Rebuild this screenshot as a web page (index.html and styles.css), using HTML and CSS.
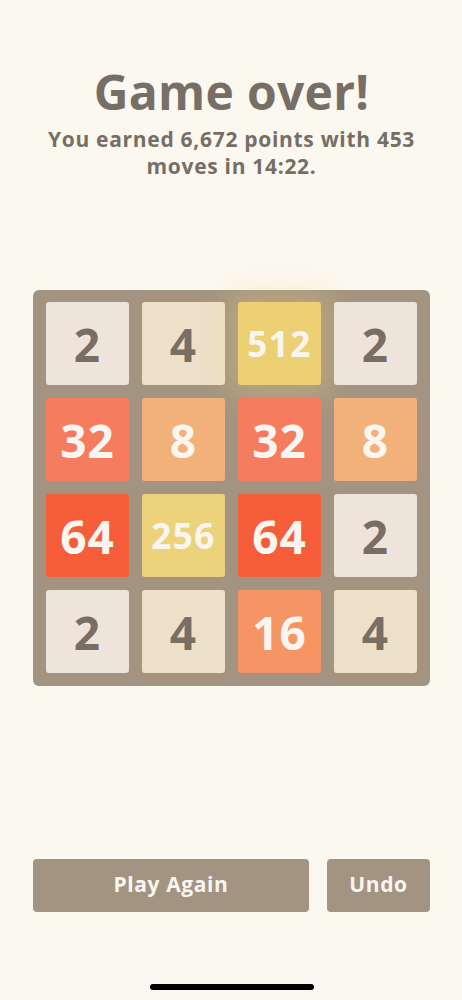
FILE: index.html
```html
<!DOCTYPE html>
<html lang="en">
<head>
    <meta charset="UTF-8">
    <meta name="viewport" content="width=device-width, initial-scale=1.0">
    <title>2048</title>
    <link rel="stylesheet" href="styles.css">
</head>
<body>
    <div class="screen">
        <div class="header">
            <h1 class="title">Game over!</h1>
            <p class="summary">You earned 6,672 points with 453 moves in 14:22.</p>
        </div>

        <div class="board">
            <div class="tile tile-2">2</div>
            <div class="tile tile-4">4</div>
            <div class="tile tile-512">512</div>
            <div class="tile tile-2">2</div>

            <div class="tile tile-32">32</div>
            <div class="tile tile-8">8</div>
            <div class="tile tile-32">32</div>
            <div class="tile tile-8">8</div>

            <div class="tile tile-64">64</div>
            <div class="tile tile-256">256</div>
            <div class="tile tile-64">64</div>
            <div class="tile tile-2">2</div>

            <div class="tile tile-2">2</div>
            <div class="tile tile-4">4</div>
            <div class="tile tile-16">16</div>
            <div class="tile tile-4">4</div>
        </div>

        <div class="actions">
            <button class="btn btn-wide">Play Again</button>
            <button class="btn">Undo</button>
        </div>

        <div class="home-bar"></div>
    </div>
</body>
</html>
```

FILE: styles.css
```css
body {
    margin: 0;
    background-color: #fbf8f0;
    font-family: "Open Sans", "DejaVu Sans", sans-serif;
    color: #776e65;
}
.screen {
    width: 462px;
    height: 1000px;
    box-sizing: border-box;
    padding: 0 32px 0 33px;
    display: flex;
    flex-direction: column;
}
.header {
    text-align: center;
    padding-top: 62px;
}
.title {
    margin: 0;
    font-size: 48px;
    line-height: 60px;
    font-weight: 700;
    letter-spacing: 0.3px;
}
.summary {
    margin: 4px 0 0;
    font-size: 21px;
    line-height: 27px;
    font-weight: 700;
    letter-spacing: 0.7px;
}
.board {
    margin-top: 110px;
    background-color: #a39482;
    border-radius: 6px;
    padding: 12px 13px 13px 13px;
    display: grid;
    grid-template-columns: repeat(4, 83px);
    grid-auto-rows: 83px;
    gap: 13px;
}
.tile {
    border-radius: 3px;
    display: flex;
    justify-content: center;
    align-items: center;
    font-size: 46px;
    font-weight: 700;
    letter-spacing: 1px;
    color: #776e65;
}
.tile-2 { background-color: #eee4da; }
.tile-4 { background-color: #ede0c8; }
.tile-8 { background-color: #f2b179; color: #f9f6f2; }
.tile-16 { background-color: #f59563; color: #f9f6f2; }
.tile-32 { background-color: #f67c5f; color: #f9f6f2; }
.tile-64 { background-color: #f65e3b; color: #f9f6f2; }
.tile-256 {
    background-color: #edd27c;
    color: #f9f6f2;
    font-size: 35px;
    letter-spacing: 1.5px;
}
.tile-512 {
    background-color: #edd073;
    color: #f9f6f2;
    font-size: 35px;
    letter-spacing: 1.5px;
    box-shadow: 0 0 30px 10px rgba(243, 215, 116, 0.3);
}
.actions {
    margin-top: auto;
    display: flex;
    gap: 18px;
}
.btn {
    height: 53px;
    width: 103px;
    border: none;
    border-radius: 4px;
    background-color: #a39482;
    color: #f9f6f2;
    font-family: inherit;
    font-size: 21px;
    font-weight: 700;
    letter-spacing: 0.6px;
    padding: 0 0 3px;
}
.btn-wide {
    flex: 1;
}
.home-bar {
    align-self: center;
    width: 164px;
    height: 6px;
    border-radius: 3px;
    background-color: #000;
    margin: 72px 0 10px;
}
```
